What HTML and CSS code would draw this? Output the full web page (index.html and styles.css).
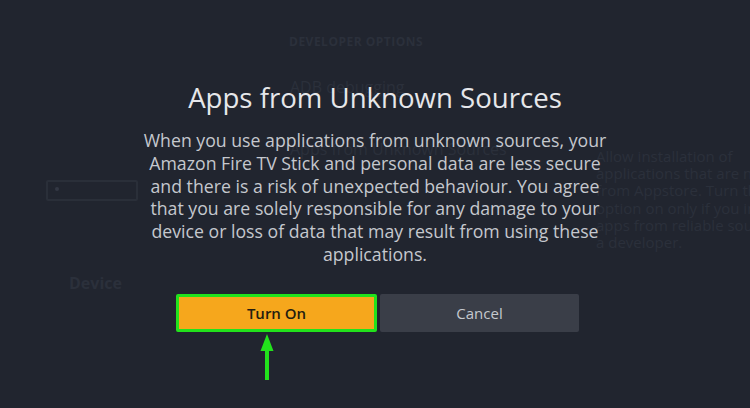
FILE: index.html
```html
<!DOCTYPE html>
<html lang="en">
<head>
    <meta charset="UTF-8">
    <meta name="viewport" content="width=device-width, initial-scale=1.0">
    <title>Apps from Unknown Sources</title>
    <link rel="stylesheet" href="styles.css">
</head>
<body>
    <!-- dimmed settings page behind the dialog -->
    <div class="settings">
        <div class="settings-title">DEVELOPER OPTIONS</div>
        <div class="settings-body">
            <div class="side">
                <div class="side-box"><span class="side-dot"></span></div>
                <div class="side-label">Device</div>
            </div>
            <div class="options">
                <div class="option">ADB debugging</div>
                <div class="option">Apps from Unknown Sources</div>
            </div>
            <div class="help">
                Allow installation of<br>
                applications that are not<br>
                from Appstore. Turn this<br>
                option on only if you install<br>
                apps from reliable sources or<br>
                a developer.
            </div>
        </div>
    </div>

    <div class="dialog">
        <h1 class="dialog-title">Apps from Unknown Sources</h1>
        <p class="dialog-text">When you use applications from unknown sources, your<br>
            Amazon Fire TV Stick and personal data are less secure<br>
            and there is a risk of unexpected behaviour. You agree<br>
            that you are solely responsible for any damage to your<br>
            device or loss of data that may result from using these<br>
            applications.</p>
        <div class="actions">
            <div class="action-col">
                <button class="btn btn-on">Turn On</button>
                <svg class="arrow" width="16" height="48" viewBox="0 0 16 48">
                    <path d="M8 1 L14.5 18 L10 18 L10 47 L6 47 L6 18 L1.5 18 Z" fill="#22e21c"/>
                </svg>
            </div>
            <button class="btn btn-cancel">Cancel</button>
        </div>
    </div>
</body>
</html>
```

FILE: styles.css
```css
:root {
    --bg: #21252f;
    --faint: #2b303b;
    --text: #c5c8ce;
    --orange: #f6a71c;
    --green: #22e21c;
    --grey-btn: #3a3e48;
}

html, body {
    margin: 0;
    padding: 0;
}

body {
    width: 750px;
    height: 408px;
    overflow: hidden;
    background: var(--bg);
    font-family: 'Open Sans', sans-serif;
    position: relative;
}

/* background page */
.settings {
    color: var(--faint);
    padding-top: 33px;
}

.settings-title {
    font-size: 12px;
    font-weight: 700;
    letter-spacing: 0.5px;
    padding-left: 289px;
}

.settings-body {
    display: flex;
    margin-top: 26px;
}

.side {
    flex: none;
    width: 92px;
    margin-left: 46px;
    padding-top: 104px;
}

.side-box {
    height: 17px;
    border: 2px solid #2a2f39;
    border-radius: 2px;
}

.side-dot {
    display: block;
    width: 4px;
    height: 4px;
    margin: 5px 0 0 7px;
    background: #333844;
    border-radius: 50%;
}

.side-label {
    margin-top: 71px;
    padding-left: 23px;
    font-size: 16px;
    line-height: 22px;
    font-weight: 700;
}

.options {
    flex: none;
    width: 300px;
    margin-left: 152px;
    font-size: 16px;
    line-height: 22px;
}

.option {
    height: 62px;
}

.help {
    flex: none;
    margin-left: 6px;
    padding-top: 72px;
    font-size: 15px;
    line-height: 17.2px;
    white-space: nowrap;
}

/* dialog */
.dialog {
    position: absolute;
    inset: 0;
    display: flex;
    flex-direction: column;
    align-items: center;
    padding-top: 77px;
}

.dialog-title {
    margin: 0;
    color: #e6e7ea;
    font-size: 27.6px;
    font-weight: 400;
    line-height: 40px;
}

.dialog-text {
    margin: 12px 0 0;
    color: var(--text);
    font-size: 17.7px;
    line-height: 22.8px;
    text-align: center;
    white-space: nowrap;
}

.actions {
    display: flex;
    gap: 3px;
    margin: 28px 0 0 5px;
}

.action-col {
    display: flex;
    flex-direction: column;
    align-items: center;
}

.btn {
    width: 201px;
    height: 38px;
    border: none;
    border-radius: 2px;
    font-family: 'Open Sans', sans-serif;
    font-size: 15px;
}

.btn-on {
    background: var(--orange);
    color: #241d10;
    border: 3px solid var(--green);
    font-weight: 600;
}

.btn-cancel {
    width: 199px;
    background: var(--grey-btn);
    color: var(--text);
    font-weight: 500;
}

.arrow {
    margin-top: 1px;
    margin-right: 20px;
}
```
